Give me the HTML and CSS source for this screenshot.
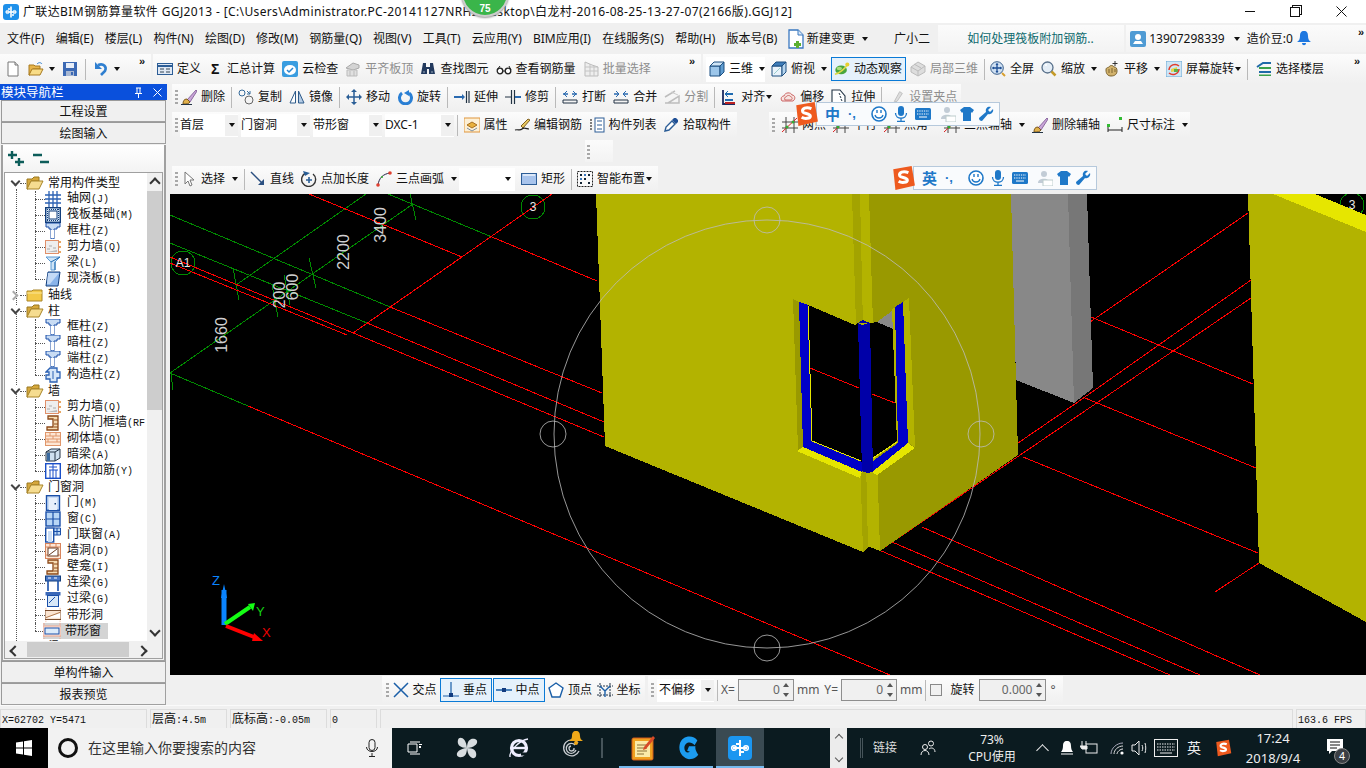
FILE: index.html
```html
<!DOCTYPE html>
<html lang="zh">
<head>
<meta charset="utf-8">
<title>广联达BIM钢筋算量软件 GGJ2013</title>
<link rel="stylesheet" href="styles.css">
</head>
<body>
<svg class="sprite" width="0" height="0">
<defs>
<symbol id="logo" viewBox="0 0 16 16"><rect width="16" height="16" rx="3" fill="#1e90ea"/><path d="M8 2.5v11M3 8h10M5 5h2M9 11h2" stroke="#fff" stroke-width="1.6" fill="none"/><circle cx="4.5" cy="8" r="1.6" fill="none" stroke="#fff"/><circle cx="11.5" cy="8" r="1.6" fill="none" stroke="#fff"/></symbol>
<symbol id="new" viewBox="0 0 16 16"><path d="M3 1h7l3 3v11H3z" fill="#fff" stroke="#777"/><path d="M10 1v3h3" fill="#ddd" stroke="#777"/></symbol>
<symbol id="open" viewBox="0 0 16 16"><path d="M1 4h5l1 1h5v3H5l-3 6H1z" fill="#e6b44a" stroke="#a87a20"/><path d="M4 8h11l-3 6H1z" fill="#f8dc86" stroke="#a87a20"/><path d="M9 3c2-2 4-1.500 5 0" stroke="#2f7fd0" fill="none"/></symbol>
<symbol id="save" viewBox="0 0 16 16"><path d="M1 1h14v14H1z" fill="#3c69b4"/><rect x="4" y="2" width="8" height="5" fill="#e8eef8"/><rect x="4" y="10" width="8" height="5" fill="#a9b8d2"/><rect x="9" y="11" width="2" height="3" fill="#3c69b4"/></symbol>
<symbol id="undo" viewBox="0 0 16 16"><path d="M5 4c6-2 9 2 7 6l-4 4" stroke="#2f7fd0" stroke-width="2.600" fill="none"/><path d="M2 1v7h7z" fill="#2f7fd0"/></symbol>
<symbol id="def" viewBox="0 0 16 16"><rect x=".5" y="2.500" width="15" height="11" fill="#dfe8f4" stroke="#2c5d96"/><path d="M1 5h14" stroke="#2c5d96" stroke-width="2"/><path d="M3 8h4M3 11h4M9 8h4M9 11h4" stroke="#345"/></symbol>
<symbol id="cloud" viewBox="0 0 16 16"><rect width="16" height="16" rx="2" fill="#3a9de0"/><ellipse cx="8" cy="9" rx="6" ry="5" fill="#fff"/><path d="M5 9l2 2 4-4" stroke="#2a86d0" stroke-width="1.500" fill="none"/></symbol>
<symbol id="flat" viewBox="0 0 16 16"><path d="M1 7l7-5 6 2v3l-6 2z" fill="#d4d4d4" stroke="#aaa"/><path d="M2 9h10v6H2z" fill="#e0e0e0" stroke="#bbb"/><path d="M5 10v5M9 10v5" stroke="#bbb"/></symbol>
<symbol id="bino" viewBox="0 0 16 16"><path d="M3 2h3v4h4V2h3l2 11h-6V8H7v5H1z" fill="#233a5e"/><path d="M3 11h2M11 11h2" stroke="#9ab"/></symbol>
<symbol id="glass" viewBox="0 0 16 16"><circle cx="4" cy="10" r="2.800" fill="#fff" stroke="#222" stroke-width="1.300"/><circle cx="12" cy="10" r="2.800" fill="#fff" stroke="#222" stroke-width="1.300"/><path d="M7 10h2M1 9l3-4M15 9l-2-4" stroke="#222"/></symbol>
<symbol id="batch" viewBox="0 0 16 16"><path d="M2 1v14h13V6L9 4 2 1z" fill="#eee" stroke="#bbb"/><path d="M2 6h13M2 10h13M7 3v12M11 5v10" stroke="#c4c4c4"/></symbol>
<symbol id="cube" viewBox="0 0 16 16"><path d="M1 5h10v10H1z" fill="#9cc6ea" stroke="#1c4f80"/><path d="M1 5l4-4h10l-4 4z" fill="#cfe5f6" stroke="#1c4f80"/><path d="M11 5l4-4v10l-4 4z" fill="#5f9cd0" stroke="#1c4f80"/></symbol>
<symbol id="top" viewBox="0 0 16 16"><path d="M1 5h10v10H1z" fill="#eaf3fb" stroke="#1c4f80"/><path d="M1 5l4-4h10l-4 4z" fill="#3e7cb8" stroke="#1c4f80"/><path d="M11 5l4-4v10l-4 4z" fill="#b7d5ee" stroke="#1c4f80"/><path d="M3 13l6-6" stroke="#9cc"/></symbol>
<symbol id="orbit" viewBox="0 0 18 16"><ellipse cx="8" cy="9" rx="6.500" ry="5" fill="#49a63c"/><ellipse cx="6" cy="7.500" rx="3" ry="2" fill="#a9dc7c"/><path d="M1 14C6 13 13 7 16 2" stroke="#ded84a" stroke-width="1.800" fill="none"/><circle cx="15" cy="3" r="2.300" fill="#e7d030"/></symbol>
<symbol id="part" viewBox="0 0 16 16"><path d="M1 6l7-5 7 4v6l-7 4-7-4z" fill="#ddd" stroke="#bbb"/><path d="M1 6l7 4 7-5M8 10v5M4 3l7 4" stroke="#bbb" fill="none"/></symbol>
<symbol id="full" viewBox="0 0 16 16"><circle cx="7" cy="7" r="6.300" fill="#cfe0f2" stroke="#3a5f8a"/><path d="M7 2.500v9M2.500 7h9" stroke="#1f4f95" stroke-width="1.300"/><path d="M5.500 4L7 2l1.500 2zM5.500 10L7 12l1.500-2zM4 5.500L2 7l2 1.500zM10 5.500L12 7l-2 1.500z" fill="#1f4f95"/><path d="M12 12l3 3" stroke="#d8a030" stroke-width="2"/></symbol>
<symbol id="zoom" viewBox="0 0 16 16"><circle cx="6.500" cy="6.500" r="5.500" fill="#e4edf6" stroke="#58708a" stroke-width="1.300"/><path d="M10.500 10.500l4 4" stroke="#c49a28" stroke-width="2.500"/><path d="M4 4h2" stroke="#fff" stroke-width="1.500"/></symbol>
<symbol id="pan" viewBox="0 0 16 16"><path d="M2 9c0-3 2-2 3-3 1-2 4-2 5 0 2 0 3 1 3 4 0 3-2 5-6 5-3 0-5-2-5-6z" fill="#d2b26c" stroke="#7c6430"/><path d="M5 8v4M8 7v5M11 8v3" stroke="#7c6430"/><path d="M11 5V0M8.500 2.500h5" stroke="#333"/></symbol>
<symbol id="rot" viewBox="0 0 16 16"><rect width="16" height="16" fill="#cfe6f6" stroke="#6aa8d4"/><path d="M3 9a6 6 0 0 1 10-4" stroke="#e23a2a" stroke-width="1.500" fill="none"/><path d="M13 8a6 6 0 0 1-10 4" stroke="#e23a2a" stroke-width="1.500" fill="none"/><path d="M5 8l6-2v4l-6 1z" fill="#e8d44c"/><path d="M8 8h4v3H8z" fill="#5bb04a"/></symbol>
<symbol id="floor" viewBox="0 0 16 16"><path d="M1 6l6-4h8" stroke="#1f6aa8" stroke-width="2" fill="none"/><path d="M3 6h12v2H3z" fill="#3aa04a"/><path d="M3 10h12v2H3z" fill="#1f6aa8"/><path d="M3 13.500h12V15H3z" fill="#3aa04a"/></symbol>
<symbol id="del" viewBox="0 0 16 16"><path d="M6 11L15 1l1 1-7 11z" fill="#c9a5d8" stroke="#8c6aa0"/><path d="M2 15c0-3 1-5 4-5l3 3c-1 2-4 2-7 2z" fill="#e0b04a" stroke="#7c5a20"/><path d="M0 15.500h11" stroke="#234"/></symbol>
<symbol id="copy" viewBox="0 0 16 16"><circle cx="4" cy="4" r="3" fill="none" stroke="#356a9a"/><circle cx="11" cy="11" r="4" fill="none" stroke="#666"/><path d="M9 2l3 3M12 2v3H9" stroke="#356a9a" fill="none"/></symbol>
<symbol id="mirror" viewBox="0 0 16 16"><path d="M6.500 2v12H1z" fill="#fff" stroke="#2d5a8a"/><path d="M9.500 2v12H15z" fill="#b6cde6" stroke="#2d5a8a"/></symbol>
<symbol id="move" viewBox="0 0 16 16"><path d="M8 1v14M1 8h14" stroke="#2a5e96" stroke-width="1.500"/><path d="M8 0l3 3H5zM8 16l3-3H5zM0 8l3-3v6zM16 8l-3-3v6z" fill="#2a5e96"/></symbol>
<symbol id="spin" viewBox="0 0 16 16"><path d="M5 4a6 6 0 1 0 7 0" stroke="#2a7fd4" stroke-width="3" fill="none"/><path d="M12 1v6l-5-3z" fill="#2a7fd4"/></symbol>
<symbol id="ext" viewBox="0 0 16 16"><path d="M0 8h8" stroke="#2a6ab0" stroke-width="2"/><path d="M8 5l3 3-3 3z" fill="#2a6ab0"/><path d="M12.500 2v12M15 2v12" stroke="#234" stroke-width="1.200"/></symbol>
<symbol id="trim" viewBox="0 0 16 16"><path d="M6.500 1v14M9.500 1v14" stroke="#234" stroke-width="1.200"/><path d="M0 8h6" stroke="#234"/><path d="M10 8h6" stroke="#2a6ab0" stroke-width="2"/></symbol>
<symbol id="brk" viewBox="0 0 16 16"><path d="M1 11h14v3H1z" fill="none" stroke="#234"/><path d="M1 5h5M10 5h5" stroke="#2a6ab0" stroke-width="1.500"/><path d="M5 2L2 5l3 3M11 2l3 3-3 3" fill="none" stroke="#2a6ab0"/></symbol>
<symbol id="mrg" viewBox="0 0 16 16"><path d="M1 11h14v3H1z" fill="none" stroke="#234"/><path d="M1 5h5M10 5h5" stroke="#2a6ab0" stroke-width="1.500"/><path d="M3 2l3 3-3 3M13 2l-3 3 3 3" fill="none" stroke="#2a6ab0"/></symbol>
<symbol id="split" viewBox="0 0 16 16"><path d="M1 14h14V7L4 14M1 8l10-6" fill="none" stroke="#bdbdbd" stroke-width="1.500"/><path d="M7 3l7 3" stroke="#ccc"/></symbol>
<symbol id="align" viewBox="0 0 16 16"><path d="M2 1v14h12" stroke="#1c2a60" stroke-width="1.800" fill="none"/><path d="M4 5h8M4 11h8" stroke="#1f6ab0" stroke-width="2"/><path d="M7 2L4 5l3 3" fill="none" stroke="#1f6ab0"/><path d="M4 13h10v2H4z" fill="#b22"/></symbol>
<symbol id="offs" viewBox="0 0 16 16"><path d="M2 12c-2-3 0-5 2-5 1-4 7-4 8-1 3 0 4 4 1 6z" fill="#f6e4e0" stroke="#c66"/><path d="M5 11c-1-2 0-3 1-3 1-2 4-2 5 0 1 0 2 2 0 3z" fill="none" stroke="#c66"/></symbol>
<symbol id="strch" viewBox="0 0 16 16"><path d="M1 1h8l5 6v8H1z" fill="#fff" stroke="#234" stroke-width="1.100"/><path d="M8 4l1 2M9 7l1 2M10 10l1 2" stroke="#234"/></symbol>
<symbol id="grip" viewBox="0 0 18 16"><path d="M1 15h16" stroke="#ccc"/><path d="M6 13L12 2l3 2-6 9z" fill="#ddd" stroke="#bbb"/></symbol>
<symbol id="attr" viewBox="0 0 16 16"><rect y="1" width="16" height="14" fill="#fdf0d6" stroke="#e0963c"/><path d="M3 8l5-3 5 3-5 3z" fill="#e8b03c" stroke="#a87020"/><path d="M3 11l5 3 5-3" stroke="#7c8ea0" fill="none"/></symbol>
<symbol id="edit" viewBox="0 0 16 16"><path d="M7 9l7-7 2 1-7 8z" fill="#e8c860" stroke="#806020"/><path d="M1 13c3-1 5 1 7-1s5 0 7 0" fill="none" stroke="#222" stroke-width="1.200"/></symbol>
<symbol id="list" viewBox="0 0 16 16"><rect x="6" y="1" width="9" height="14" fill="#fff" stroke="#2c5d96"/><path d="M8 4h5M8 8h5M8 12h5" stroke="#2c5d96"/><path d="M1 3h3M1 6h3M1 9h3M1 12h3" stroke="#555" stroke-width="1.600" stroke-dasharray="2 1"/></symbol>
<symbol id="pick" viewBox="0 0 16 16"><path d="M2 14l1-4 6-6 3 3-6 6z" fill="#fff" stroke="#2c5d96" stroke-width="1.400"/><path d="M9 3l2-2h2l2 2v2l-2 2z" fill="#1f4f95"/></symbol>
<symbol id="axis" viewBox="0 0 16 16"><path d="M4 0v16M12 0v16M0 5h16M0 11h16" stroke="#444"/><path d="M0 15L15 1" stroke="#d22"/><circle cx="5" cy="10" r="1.500" fill="#3a3"/><circle cx="11" cy="5" r="1.500" fill="#3a3"/></symbol>
<symbol id="dim" viewBox="0 0 16 16"><path d="M1 10v5M15 10v5M1 13h14" stroke="#222"/><rect y="7" width="3" height="3" fill="#3b3"/><rect x="12" width="3" height="3" fill="#3b3"/></symbol>
<symbol id="cur" viewBox="0 0 16 16"><path d="M3 1v12l3-3 2 5 2-1-2-5h4z" fill="#fff" stroke="#777"/></symbol>
<symbol id="line" viewBox="0 0 16 16"><path d="M1 1l12 12" stroke="#2a4f80" stroke-width="1.500"/><path d="M14 8v6H8z" fill="#2a4f80"/></symbol>
<symbol id="len" viewBox="0 0 16 16"><path d="M5 2A7 7 0 1 0 12 3" stroke="#333" stroke-width="1.400" fill="none"/><path d="M8 6v6M5 9h6" stroke="#2a5e96" stroke-width="1.600"/><path d="M2 0l7 2-5 3z" fill="#2a5e96"/></symbol>
<symbol id="arc" viewBox="0 0 16 16"><path d="M2 14C3 7 7 3 14 2" stroke="#224" fill="none"/><circle cx="2" cy="14" r="1.800" fill="#e04030"/><circle cx="14" cy="2" r="1.800" fill="#e04030"/><circle cx="6" cy="6" r="1" fill="#3a3"/></symbol>
<symbol id="rect" viewBox="0 0 16 16"><rect x=".5" y="2.500" width="15" height="11" fill="#a8c4ec" stroke="#2c5d96"/><path d="M2 4h12" stroke="#dce8f8" stroke-width="2"/></symbol>
<symbol id="smart" viewBox="0 0 16 16"><rect x=".5" y=".5" width="15" height="15" fill="#fafafa" stroke="#222" stroke-dasharray="2 1"/><path d="M3 3h2v2H3zM11 3h2v2h-2zM3 11h2v2H3zM11 11h2v2h-2zM7 7h2v2H7z" fill="#123"/><path d="M7 3h2v2H7zM3 7h2v2H3z" fill="#3a78c0"/></symbol>
<symbol id="cross" viewBox="0 0 16 16"><path d="M1 1l14 14M15 1L1 15" stroke="#1a5fa8" stroke-width="1.500"/></symbol>
<symbol id="perp" viewBox="0 0 16 16"><path d="M8 0v14M0 14h16" stroke="#1a5fa8" stroke-width="1.200"/><rect x="6" y="11" width="4" height="4" fill="#123c80"/></symbol>
<symbol id="mid" viewBox="0 0 16 16"><path d="M0 8h16" stroke="#1a5fa8" stroke-width="1.500"/><rect x="6" y="6" width="4" height="4" fill="#123c80"/></symbol>
<symbol id="vert" viewBox="0 0 16 16"><path d="M8 1l7 5-3 9H4L1 6z" fill="#fff" stroke="#1a5fa8" stroke-width="1.400"/></symbol>
<symbol id="coord" viewBox="0 0 16 16"><path d="M3 1v14M13 1v14M0 4h16M0 13h16" stroke="#234" stroke-dasharray="2 1"/><path d="M3 4l5 5 5-5M8 9v6" stroke="#1a5fa8" stroke-width="1.400" fill="none"/></symbol>
<symbol id="doc" viewBox="0 0 16 20"><path d="M1 1h9l5 5v13H1z" fill="#fff" stroke="#3a78c0" stroke-width="1.300"/><path d="M10 1v5h5" fill="#d6e6f6" stroke="#3a78c0"/><path d="M8 12h3v2h2v3h-2v2H8v-2H6v-3h2z" fill="#5cb030"/></symbol>
<symbol id="acct" viewBox="0 0 16 16"><rect width="16" height="16" rx="2" fill="#4f9bd4"/><circle cx="8" cy="6" r="3" fill="#fff"/><path d="M3 13h10l-2-3H5z" fill="#fff"/></symbol>
<symbol id="bell" viewBox="0 0 16 16"><path d="M8 0c3 0 4 2 4 5 0 3 1 5 3 6H1c2-1 3-3 3-6 0-3 1-5 4-5z" fill="#1e78e0"/><path d="M6 12h4c0 3-4 3-4 0z" fill="#1e78e0"/></symbol>
<symbol id="t-grid" viewBox="0 0 16 16"><path d="M4 0v16M8 0v16M12 0v16M0 4h16M0 8h16M0 12h16" stroke="#2c62b4" stroke-width="1.300"/></symbol>
<symbol id="t-raft" viewBox="0 0 16 16"><rect x=".7" y=".7" width="14.600" height="14.600" fill="#d8e8f6" stroke="#123e7c" stroke-width="1.400"/><rect x="4" y="4" width="8" height="8" fill="#fff" stroke="#123e7c"/><path d="M2 2.500h12M2 13.500h12M2.500 2v12M13.500 2v12" stroke="#123e7c" stroke-dasharray="1 1"/></symbol>
<symbol id="t-col" viewBox="0 0 16 16"><path d="M1 0h14v4h-3v2H9v10H6V6H4V4H1z" fill="#c8dcf4" stroke="#1a4fa8"/><path d="M6 7h3v8H6z" fill="#fff"/></symbol>
<symbol id="t-wall" viewBox="0 0 16 16"><rect x=".5" y="1.500" width="13" height="13" fill="#eee" stroke="#e0906a"/><path d="M2 13l10-2V13z" fill="#bbb"/><path d="M2 10h3M4 7h3M8 9h3" stroke="#ccc" stroke-width="2"/><path d="M14 3h2M14 8h2M14 13h2" stroke="#e08a30" stroke-width="1.400"/></symbol>
<symbol id="t-beam" viewBox="0 0 16 16"><path d="M1 2h14l-5 5v8H6V7z" fill="#cfe4f6" stroke="#5a9ad4"/><path d="M6 7l9-5M10 7v8" stroke="#1f6ab0"/></symbol>
<symbol id="t-slab" viewBox="0 0 16 16"><path d="M3 1h12l-2 14H1z" fill="#8ab4ea" stroke="#123e7c"/><path d="M3 2h11L5 13H2z" fill="#c4daf6"/></symbol>
<symbol id="t-gz" viewBox="0 0 16 16"><path d="M5 1h7v4h3v6h-3v4H5v-3H1V8h3V5H1z" fill="#d6e6f8" stroke="#2c62b4" stroke-width="1.300"/><path d="M8 4v8" stroke="#2c62b4"/></symbol>
<symbol id="t-rf" viewBox="0 0 16 16"><path d="M3 1h10v14H2v-3h6V4H3z" fill="#f6dcb4" stroke="#8c4818" stroke-width="1.300"/><path d="M9 5h4M9 9h4M9 12h4" stroke="#8c4818"/></symbol>
<symbol id="t-brick" viewBox="0 0 16 16"><rect x=".5" y="1.500" width="15" height="13" fill="#fde6d4" stroke="#e0966a"/><path d="M1 5h14M1 8h14M1 11h14M5 2v3M11 2v3M8 5v3M3 8v3M12 8v3" stroke="#e0966a"/></symbol>
<symbol id="t-hb" viewBox="0 0 16 16"><path d="M1 5l5-3h9v9l-5 3H1z" fill="#cfe0f0" stroke="#234"/><path d="M1 5h9v9M10 5l5-3" stroke="#234" fill="none"/><rect x="2" y="6" width="3" height="8" fill="#3a6aa0"/></symbol>
<symbol id="t-rbr" viewBox="0 0 16 16"><rect x=".7" y=".7" width="14.600" height="14.600" fill="none" stroke="#1a4fc8" stroke-width="1.400"/><path d="M4 4h8M4 7h9M8 1v15M5 7v8M11 7v8" stroke="#1a4fc8"/></symbol>
<symbol id="t-door" viewBox="0 0 16 16"><rect x="1.500" y=".7" width="13" height="14.600" fill="#c8dcf6" stroke="#1a4fa8" stroke-width="1.400"/><rect x="4" y="3" width="8" height="12" fill="#e8f0fb"/><rect x="9.500" y="8" width="1.500" height="1.500" fill="#123e7c"/></symbol>
<symbol id="t-win" viewBox="0 0 16 16"><rect x="1" y="1" width="14" height="14" fill="#b8d6f6" stroke="#1a4fa8" stroke-width="1.400"/><path d="M8 1v14M1 8h14" stroke="#1a4fa8" stroke-width="1.200"/></symbol>
<symbol id="t-dw" viewBox="0 0 16 16"><rect x=".7" y="1" width="8" height="14" fill="#fff" stroke="#1a4fa8" stroke-width="1.400"/><rect x="3" y="4" width="4" height="11" fill="#c8dcf6"/><path d="M9 1h6.500v7H9z" fill="#b8d6f6" stroke="#1a4fa8"/><path d="M12 1v7M9 4.500h6" stroke="#1a4fa8"/></symbol>
<symbol id="t-hole" viewBox="0 0 16 16"><rect x=".5" y=".5" width="15" height="15" fill="#fde6d4" stroke="#d8845c"/><path d="M1 4h14M1 12h14M5 1v3M11 1v3" stroke="#d8845c"/><rect x="3" y="5" width="10" height="8" fill="#fff" stroke="#6a3a20"/><path d="M4 12l8-6" stroke="#6a3a20"/></symbol>
<symbol id="t-lb" viewBox="0 0 16 16"><rect x=".5" y="1" width="15" height="5" fill="#4a78c8" stroke="#123e7c"/><path d="M3 3h3M9 3h3" stroke="#fff"/><path d="M3 6v10M13 6v10" stroke="#1a4fa8" stroke-width="1.600"/></symbol>
<symbol id="t-gl" viewBox="0 0 16 16"><rect x=".5" y="1" width="15" height="3.500" fill="#3a68b8"/><rect x="2.500" y="4.500" width="11" height="11" fill="#d8e8f8" stroke="#1a4fa8"/><path d="M4 12l6-6" stroke="#1a4fa8"/></symbol>
<symbol id="t-sh" viewBox="0 0 18 16"><path d="M1 0v16M17 0v16" stroke="#f0b090" stroke-dasharray="2 1"/><rect y="3" width="18" height="10" fill="#fbe4d0" stroke="#6a3a18"/><path d="M1 11l16-5v5z" fill="#fff"/><path d="M1 11l16-6" stroke="#a86a3a"/></symbol>
<symbol id="t-sw" viewBox="0 0 18 16"><path d="M1 0v16M17 0v16" stroke="#f0a890" stroke-dasharray="2 1"/><rect y="3" width="18" height="10" fill="#f8e8e0" stroke="#f0a890"/><rect x="2" y="5" width="14" height="6" fill="#dcecfb" stroke="#1a4fa8"/></symbol>
<symbol id="fo" viewBox="0 0 18 16"><path d="M1 4h5l2-2h5v4H5L2 14H1z" fill="#d6a83c" stroke="#9a7820"/><path d="M5 6h12l-4 8H1z" fill="#f5dc90" stroke="#a88428"/></symbol>
<symbol id="fc" viewBox="0 0 18 16"><path d="M1 4h5l1-1h9v11H1z" fill="#f3c948" stroke="#a88428"/><path d="M1 6h15" stroke="#fbe79a"/></symbol>
<symbol id="ime-s" viewBox="0 0 24 24"><path d="M3 4l17-3 3 18-18 4z" fill="#ee5a1e"/><path d="M17 7c-5-2-9 0-8 3 1 2 7 1 7 4 0 2-5 3-8 1" stroke="#fff" stroke-width="2.800" fill="none"/></symbol>
<symbol id="smile" viewBox="0 0 16 16"><circle cx="8" cy="8" r="7" fill="#fff" stroke="#1e78c8" stroke-width="1.600"/><path d="M4 9c1 4 7 4 8 0" stroke="#1e78c8" stroke-width="1.300" fill="none"/><path d="M6 4v3M10 4v3" stroke="#1e78c8" stroke-width="1.400"/></symbol>
<symbol id="mic" viewBox="0 0 16 16"><rect x="5" width="6" height="10" rx="3" fill="#1e78c8"/><path d="M2.500 7c0 7 11 7 11 0M8 12v3M4 15.500h8" stroke="#1e78c8" stroke-width="1.300" fill="none"/></symbol>
<symbol id="kb" viewBox="0 0 16 12"><rect width="16" height="12" rx="1.500" fill="#1e78c8"/><path d="M2 3h12M2 6h12" stroke="#fff" stroke-dasharray="1.300 1" /><path d="M4 9h8" stroke="#fff"/></symbol>
<symbol id="usr" viewBox="0 0 16 16"><circle cx="7" cy="4" r="3" fill="#c2ccd6"/><path d="M1 13c0-5 8-5 10-3H6v3z" fill="#c2ccd6"/><rect x="6" y="10" width="10" height="6" fill="#fff" stroke="#bcc"/></symbol>
<symbol id="shirt" viewBox="0 0 16 16"><path d="M5 1h6l4 3-2 3-1-1v9H4V6L3 7 1 4z" fill="#1e78c8"/></symbol>
<symbol id="wrench" viewBox="0 0 16 16"><path d="M15 3l-3 3-2-2 3-3c-3-1-6 1-5 5L1 12c0 2 1 3 3 3l6-7c3 1 6-2 5-5z" fill="#1e78c8"/></symbol>
<symbol id="win" viewBox="0 0 16 16"><path d="M0 2.500l7-1v6H0zM8 1.300L16 0v7.500H8zM0 8.500h7v6l-7-1zM8 8.500h8V16l-8-1.200z" fill="#fff"/></symbol>
<symbol id="tview" viewBox="0 0 16 16"><path d="M3 2h10M3 14h10M1 4h9v8H1z" stroke="#fff" fill="none"/><rect x="12" y="6" width="2" height="2" fill="#fff"/><rect x="12" y="4" width="3" height="1" fill="#fff"/></symbol>
<symbol id="fan" viewBox="0 0 22 22"><path d="M11 11C3 11 1 7 2 3s8-3 9 8zM11 11c0-8 4-10 8-9s3 8-8 9zM11 11c8 0 10 4 9 8s-8 3-9-8zM11 11c0 8-4 10-8 9s-3-8 8-9z" fill="#d8dde0"/></symbol>
<symbol id="ie" viewBox="0 0 22 22"><circle cx="11" cy="11" r="7.500" fill="none" stroke="#eef" stroke-width="3.200"/><path d="M5 11h13" stroke="#eef" stroke-width="2.400"/><path d="M13 17h8" stroke="#0a1a1f" stroke-width="3"/><path d="M2 20C1 14 12 3 20 2" stroke="#eef" stroke-width="1.400" fill="none"/></symbol>
<symbol id="swirl" viewBox="0 0 22 22"><path d="M18 6a8 8 0 1 0 1 8M15 8a5 5 0 1 0 1 5M11 9a2.500 2.500 0 1 0 3 2" stroke="#c8ccd0" stroke-width="1.300" fill="none"/></symbol>
<symbol id="belly" viewBox="0 0 14 14"><path d="M7 0c3 0 4 2 4 5 0 2 1 4 3 5H0c2-1 3-3 3-5 0-3 1-5 4-5z" fill="#f0a818"/><circle cx="7" cy="12" r="2" fill="#f0a818"/></symbol>
<symbol id="note" viewBox="0 0 24 26"><rect x="1" y="3" width="21" height="22" rx="1.500" fill="#f0a020" stroke="#d05818"/><rect x="4" y="6" width="15" height="16" fill="#fbeaa8"/><path d="M6 10h10M6 13h10M6 16h10M6 19h7" stroke="#8a7038"/><path d="M13 12l9-11 2 2-9 11-3 1z" fill="#d84a28"/></symbol>
<symbol id="gapp" viewBox="0 0 24 28"><path d="M21 6C17-1 4 0 2 10c-2 9 4 15 10 16 6 0 9-3 10-5-1-1-4-6-3-9h-7l-2 5 3 1c-3 2-6 0-6-4 0-6 7-8 11-3z" fill="#1c9cf0"/></symbol>
<symbol id="gblue" viewBox="0 0 24 24"><rect width="24" height="24" rx="4" fill="#1b96f0"/><path d="M12 4v16M5 12h14M8 8h3M13 16h3" stroke="#fff" stroke-width="2" fill="none"/><circle cx="6" cy="12" r="2.300" fill="none" stroke="#fff" stroke-width="1.500"/><circle cx="18" cy="12" r="2.300" fill="none" stroke="#fff" stroke-width="1.500"/></symbol>
<symbol id="people" viewBox="0 0 16 16"><circle cx="5" cy="7" r="2.500" fill="none" stroke="#eee"/><path d="M1 15c0-6 8-6 8 0" stroke="#eee" fill="none"/><circle cx="11" cy="3.500" r="2.500" fill="none" stroke="#eee"/><path d="M9 9c2-2 6-1 6 3" stroke="#eee" fill="none"/></symbol>
<symbol id="bellw" viewBox="0 0 14 16"><path d="M7 1c3 0 4 2 4 5s1 5 2 6H1c1-1 2-3 2-6s1-5 4-5z" fill="#fff"/><path d="M1 14h12" stroke="#fff"/></symbol>
<symbol id="plug" viewBox="0 0 18 16"><rect x="6" y="4" width="11" height="9" fill="none" stroke="#eee"/><path d="M2 1v5M6 1v3M0 6h7v3H2z" fill="#eee" stroke="#eee"/></symbol>
<symbol id="wifi" viewBox="0 0 16 16"><path d="M2 14C2 8 8 3 14 3" stroke="#aab" fill="none"/><path d="M5 14c0-4 4-8 9-8" stroke="#ddd" fill="none"/><path d="M8 14c0-2 3-5 6-5" stroke="#eee" fill="none"/><circle cx="13" cy="13" r="1.600" fill="#fff"/></symbol>
<symbol id="vol" viewBox="0 0 16 16"><path d="M1 5h3l4-4v14l-4-4H1z" fill="none" stroke="#eee"/><path d="M11 5c1 2 1 4 0 6M14 3c1 3 1 7 0 10" stroke="#eee" fill="none"/></symbol>
<symbol id="kbw" viewBox="0 0 24 18"><rect x=".5" y=".5" width="23" height="17" fill="none" stroke="#eee"/><path d="M3 5h18M3 8h18M3 11h18" stroke="#eee" stroke-dasharray="1.500 1"/><path d="M6 14h12" stroke="#eee"/></symbol>
<symbol id="msg" viewBox="0 0 16 16"><path d="M0 0h16v12H5l-3 3v-3H0z" fill="#fff"/><path d="M3 3h10M3 6h10M3 9h7" stroke="#111"/></symbol>
</defs>
</svg>

<div class="app">
  <header class="title">
    <svg class="tlogo"><use href="#logo"/></svg>
    <span class="ttext">广联达BIM钢筋算量软件 GGJ2013 - [C:\Users\Administrator.PC-20141127NRHI\Desktop\白龙村-2016-08-25-13-27-07(2166版).GGJ12]</span>
    <div class="winbtns">
      <span class="wmin"></span><span class="wmax"></span>
      <svg class="wcls" viewBox="0 0 11 11"><path d="M.5.500l10 10M10.500.500l-10 10" stroke="#111" fill="none"/></svg>
    </div>
  </header>

  <nav class="menu">
    <span>文件(F)</span><span>编辑(E)</span><span>楼层(L)</span><span>构件(N)</span><span>绘图(D)</span><span>修改(M)</span><span>钢筋量(Q)</span><span>视图(V)</span><span>工具(T)</span><span>云应用(Y)</span><span>BIM应用(I)</span><span>在线服务(S)</span><span>帮助(H)</span><span>版本号(B)</span>
    <span class="t newch"><svg class="ic docic"><use href="#doc"/></svg>新建变更</span><i class="dd mdd"></i>
    <span class="helper">广小二</span>
    <span class="hint">如何处理筏板附加钢筋..</span>
    <div class="acct">
      <svg class="ic"><use href="#acct"/></svg><span>13907298339</span><i class="dd"></i><span class="bean">造价豆:0</span><svg class="ic bellic"><use href="#bell"/></svg><span class="more">»</span>
    </div>
  </nav>

  <div class="bar1">
    <div class="tb tb-a">
      <svg class="ic"><use href="#new"/></svg><span class="t2"><svg class="ic"><use href="#open"/></svg><i class="dd"></i></span><svg class="ic"><use href="#save"/></svg><i class="sep"></i><span class="t2"><svg class="ic"><use href="#undo"/></svg><i class="dd"></i></span><span class="more">»</span>
    </div>
    <div class="tb tb-b">
      <span class="t"><svg class="ic"><use href="#def"/></svg>定义</span>
      <span class="t"><b class="sigma">Σ</b>汇总计算</span>
      <span class="t"><svg class="ic"><use href="#cloud"/></svg>云检查</span>
      <span class="t off"><svg class="ic"><use href="#flat"/></svg>平齐板顶</span>
      <span class="t"><svg class="ic"><use href="#bino"/></svg>查找图元</span>
      <span class="t"><svg class="ic"><use href="#glass"/></svg>查看钢筋量</span>
      <span class="t off"><svg class="ic"><use href="#batch"/></svg>批量选择</span>
      <span class="more">»</span>
    </div>
    <div class="tb tb-c">
      <span class="t combo3d"><svg class="ic"><use href="#cube"/></svg>三维<i class="dd"></i></span>
      <span class="t"><svg class="ic"><use href="#top"/></svg>俯视</span><i class="dd"></i>
      <span class="t on orbitbtn"><svg class="ic"><use href="#orbit"/></svg>动态观察</span>
      <span class="t off mn2"><svg class="ic"><use href="#part"/></svg>局部三维</span><i class="sep"></i>
      <span class="t"><svg class="ic"><use href="#full"/></svg>全屏</span>
      <span class="t ml1"><svg class="ic"><use href="#zoom"/></svg>缩放</span><i class="dd"></i>
      <span class="t ml2"><svg class="ic"><use href="#pan"/></svg>平移</span><i class="dd"></i>
      <span class="t ml1"><svg class="ic"><use href="#rot"/></svg>屏幕旋转<i class="dd"></i></span><i class="sep"></i>
      <span class="t ml3"><svg class="ic"><use href="#floor"/></svg>选择楼层</span>
      <span class="more">»</span>
    </div>
  </div>

  <div class="work">
    <aside class="side">
      <div class="dock"><span>模块导航栏</span><span class="dock-r"><svg class="pin" viewBox="0 0 9 11"><path d="M2 1h5M3 1v5M6 1v5M1 6.500h7M4.500 7v4" stroke="#fff" fill="none"/></svg><svg class="pin" viewBox="0 0 9 9"><path d="M.5.500l8 8M8.500.500l-8 8" stroke="#fff"/></svg></span></div>
      <div class="sbtn">工程设置</div>
      <div class="sbtn">绘图输入</div>
      <div class="panel">
        <div class="expand">
          <svg class="exp" viewBox="0 0 18 16"><path d="M1 4h9M5 0v8M8 11h9M12 7v8" stroke="#0d5d5a" stroke-width="2.400" fill="none"/></svg>
          <svg class="exp" viewBox="0 0 18 16"><path d="M1 4h9M8 11h9" stroke="#0d5d5a" stroke-width="2.400" fill="none"/></svg>
        </div>
        <div class="treebox">
          <div class="tree">
            <div class="fold"><i class="chev"></i><svg class="fi"><use href="#fo"/></svg>常用构件类型</div>
            <div class="leaf"><svg class="li"><use href="#t-grid"/></svg><span>轴网<em>(J)</em></span></div>
            <div class="leaf"><svg class="li"><use href="#t-raft"/></svg><span>筏板基础<em>(M)</em></span></div>
            <div class="leaf"><svg class="li"><use href="#t-col"/></svg><span>框柱<em>(Z)</em></span></div>
            <div class="leaf"><svg class="li"><use href="#t-wall"/></svg><span>剪力墙<em>(Q)</em></span></div>
            <div class="leaf"><svg class="li"><use href="#t-beam"/></svg><span>梁<em>(L)</em></span></div>
            <div class="leaf last"><svg class="li"><use href="#t-slab"/></svg><span>现浇板<em>(B)</em></span></div>
            <div class="fold"><i class="chev shut"></i><svg class="fi"><use href="#fc"/></svg>轴线</div>
            <div class="fold"><i class="chev"></i><svg class="fi"><use href="#fo"/></svg>柱</div>
            <div class="leaf"><svg class="li"><use href="#t-col"/></svg><span>框柱<em>(Z)</em></span></div>
            <div class="leaf"><svg class="li"><use href="#t-col"/></svg><span>暗柱<em>(Z)</em></span></div>
            <div class="leaf"><svg class="li"><use href="#t-col"/></svg><span>端柱<em>(Z)</em></span></div>
            <div class="leaf last"><svg class="li"><use href="#t-gz"/></svg><span>构造柱<em>(Z)</em></span></div>
            <div class="fold"><i class="chev"></i><svg class="fi"><use href="#fo"/></svg>墙</div>
            <div class="leaf"><svg class="li"><use href="#t-wall"/></svg><span>剪力墙<em>(Q)</em></span></div>
            <div class="leaf"><svg class="li"><use href="#t-rf"/></svg><span>人防门框墙<em>(RF</em></span></div>
            <div class="leaf"><svg class="li"><use href="#t-brick"/></svg><span>砌体墙<em>(Q)</em></span></div>
            <div class="leaf"><svg class="li"><use href="#t-hb"/></svg><span>暗梁<em>(A)</em></span></div>
            <div class="leaf last"><svg class="li"><use href="#t-rbr"/></svg><span>砌体加筋<em>(Y)</em></span></div>
            <div class="fold"><i class="chev"></i><svg class="fi"><use href="#fo"/></svg>门窗洞</div>
            <div class="leaf"><svg class="li"><use href="#t-door"/></svg><span>门<em>(M)</em></span></div>
            <div class="leaf"><svg class="li"><use href="#t-win"/></svg><span>窗<em>(C)</em></span></div>
            <div class="leaf"><svg class="li"><use href="#t-dw"/></svg><span>门联窗<em>(A)</em></span></div>
            <div class="leaf"><svg class="li"><use href="#t-hole"/></svg><span>墙洞<em>(D)</em></span></div>
            <div class="leaf"><svg class="li"><use href="#t-rf"/></svg><span>壁龛<em>(I)</em></span></div>
            <div class="leaf"><svg class="li"><use href="#t-lb"/></svg><span>连梁<em>(G)</em></span></div>
            <div class="leaf"><svg class="li"><use href="#t-gl"/></svg><span>过梁<em>(G)</em></span></div>
            <div class="leaf"><svg class="li"><use href="#t-sh"/></svg><span>带形洞</span></div>
            <div class="leaf sel last"><svg class="li"><use href="#t-sw"/></svg><span>带形窗</span></div>
            <div class="fold"><i class="chev shut"></i><svg class="fi"><use href="#fc"/></svg>梁</div>
          </div>
          <div class="vscroll"><span class="arr up"></span><span class="vthumb"></span><span class="arr down"></span></div>
          <div class="hscroll"><span class="arr left"></span><span class="hthumb"></span><span class="arr right"></span></div>
        </div>
      </div>
      <div class="sbtn">单构件输入</div>
      <div class="sbtn">报表预览</div>
    </aside>

    <main class="main">
      <div class="tools">
        <div class="rowt">
          <div class="tb tb2">
            <i class="gr"></i>
            <span class="t"><svg class="ic"><use href="#del"/></svg>删除</span><i class="sep"></i>
            <span class="t"><svg class="ic"><use href="#copy"/></svg>复制</span>
            <span class="t"><svg class="ic"><use href="#mirror"/></svg>镜像</span><i class="sep"></i>
            <span class="t"><svg class="ic"><use href="#move"/></svg>移动</span>
            <span class="t"><svg class="ic"><use href="#spin"/></svg>旋转</span><i class="sep"></i>
            <span class="t"><svg class="ic"><use href="#ext"/></svg>延伸</span>
            <span class="t"><svg class="ic"><use href="#trim"/></svg>修剪</span><i class="sep"></i>
            <span class="t"><svg class="ic"><use href="#brk"/></svg>打断</span>
            <span class="t"><svg class="ic"><use href="#mrg"/></svg>合并</span>
            <span class="t off"><svg class="ic"><use href="#split"/></svg>分割</span><i class="sep"></i>
            <span class="t"><svg class="ic"><use href="#align"/></svg>对齐<i class="dd"></i></span>
            <span class="t off1"><svg class="ic"><use href="#offs"/></svg>偏移</span>
            <span class="t"><svg class="ic"><use href="#strch"/></svg>拉伸</span><i class="sep"></i>
            <span class="t off off1"><svg class="ic"><use href="#grip"/></svg>设置夹点</span>
          </div>
        </div>
        <div class="rowt">
          <div class="tb tb3">
            <i class="gr"></i>
            <span class="cb"><span class="cbt">首层</span><span class="cba"><i class="dd"></i></span></span>
            <span class="cb"><span class="cbt">门窗洞</span><span class="cba"><i class="dd"></i></span></span>
            <span class="cb"><span class="cbt">带形窗</span><span class="cba"><i class="dd"></i></span></span>
            <span class="cb"><span class="cbt">DXC-1</span><span class="cba"><i class="dd"></i></span></span>
            <i class="sep"></i>
            <span class="t"><svg class="ic"><use href="#attr"/></svg>属性</span>
            <span class="t"><svg class="ic"><use href="#edit"/></svg>编辑钢筋</span>
            <span class="t"><svg class="ic"><use href="#list"/></svg>构件列表</span>
            <span class="t"><svg class="ic"><use href="#pick"/></svg>拾取构件</span>
          </div>
          <div class="tb tb3b">
            <i class="gr"></i>
            <span class="t"><svg class="ic"><use href="#axis"/></svg>两点</span>
            <span class="t"><svg class="ic"><use href="#axis"/></svg>平行</span>
            <span class="t wide"><svg class="ic"><use href="#axis"/></svg>点角</span>
            <span class="t"><svg class="ic"><use href="#axis"/></svg>三点辅轴</span><i class="dd"></i>
            <span class="t"><svg class="ic"><use href="#del"/></svg>删除辅轴</span>
            <span class="t"><svg class="ic"><use href="#dim"/></svg>尺寸标注</span><i class="dd"></i>
          </div>
        </div>
        <div class="rowgrip"><div class="stub"><i class="gr"></i></div></div>
        <div class="rowt">
          <div class="tb tb4">
            <i class="gr"></i>
            <span class="t sel1"><svg class="ic"><use href="#cur"/></svg>选择</span><i class="dd"></i><i class="sep"></i>
            <span class="t"><svg class="ic"><use href="#line"/></svg>直线</span>
            <span class="t"><svg class="ic"><use href="#len"/></svg>点加长度</span>
            <span class="t"><svg class="ic"><use href="#arc"/></svg>三点画弧</span><i class="dd"></i>
            <span class="blank"><i class="dd"></i></span>
            <span class="t"><svg class="ic"><use href="#rect"/></svg>矩形</span><i class="sep"></i>
            <span class="t"><svg class="ic"><use href="#smart"/></svg>智能布置<i class="dd"></i></span>
          </div>
        </div>
      </div>

      <div class="canvas">
        <svg class="scene" viewBox="170 194 1196 481" width="1196" height="481">
          <g class="green">
            <path d="M170 215L390 307M170 243L367 323M170 373L248 406M170 373L413 204M236 285L366 194M388 194L492 237"/>
            <path d="M410 194L416 220M309 258L316 288M284 275L290 305M272 285L278 317M233 268L239 300M171 373L173 390"/>
            <circle cx="183" cy="263" r="12"/><circle cx="533" cy="207" r="12"/><circle cx="1352" cy="205" r="12"/>
          </g>
          <g class="red">
            <path d="M170 257L604 437M170 263L347 335M367 323L604 422M390 307L602 393M309 194L462 257M492 237L597 281M248 406L890 675"/>
            <path d="M353 333L552 194M462 257L353 333"/>
            <path d="M1091 317L1253 384M1085 398L1256 468M1023 457L1258 553"/>
            <path d="M1090 322L1248 213M1018 443L1075 404M1075 404L1251 280M882 549L1251 298"/>
            <path d="M922 527L1260 675M892 542L1200 675M872 547L1170 675M1259 563L1215 592"/>
          </g>
          <text class="dim" transform="translate(227 335) rotate(-90)">1660</text>
          <text class="dim" transform="translate(285 295) rotate(-90)">200</text>
          <text class="dim" transform="translate(298 287) rotate(-90)">600</text>
          <text class="dim" transform="translate(349 252) rotate(-90)">2200</text>
          <text class="dim" transform="translate(386 225) rotate(-90)">3400</text>
          <text class="axt" x="183" y="267">A1</text>
          <text class="axt" x="533" y="211">3</text>
          <text class="axt" x="1352" y="209">3</text>

          <g class="solid">
            <path class="l" d="M596 194H852L863 552L605 446Z"/>
            <path class="d2" d="M852 194H860L868 547L863 552Z"/>
            <path class="l" d="M860 194H869L880 551L870 547L868 547Z"/>
            <path class="r" d="M869 194H1011L1018 455L880 551Z"/>
            <path class="g1" d="M1011 194H1068L1074 403L1016 380Z"/>
            <path class="g2" d="M1068 194H1087L1093 388L1074 403Z"/>
            <path class="l" d="M1248 194H1273L1366 232V622L1259 563Z"/>
            <path class="y" d="M1273 194H1315L1366 215V232Z"/>
            <!-- window -->
            <path class="r" d="M793 299L799 302L803 447L798 450Z"/>
            <path class="k" d="M808 305L855 325L858 323L870 323L877 322L892 311L897 441L873 458L862 462L812 441Z"/>
            <path class="g1" d="M877 322L892 311L893 329Z"/>
            <path class="l" d="M892 309L896 307L899 443L897 443Z"/>
            <path class="l" d="M903 302L909 298L915 447L908 443Z"/>
            <path class="b" d="M799 302L808 305L812 441L803 447Z"/>
            <path class="b" d="M895 307L903 302L908 443L898 443Z"/>
            <path class="b" d="M803 447L812 441L862 462V472Z"/>
            <path class="b" d="M873 461L898 443L908 443L872 472Z"/>
            <path class="bd" d="M858 323L863 320L870 323L873 472L867 473L862 471Z"/>
            <path class="y" d="M797 451L803 447L862 472L860 478Z"/>
            <path class="y" d="M872 472L908 443L915 448L877 475Z"/>
            <path class="l" d="M869 323H858L862 325Z"/>
            <path class="yl" d="M808 305L812 441L861 461M873 458L897 442"/>
            <path class="redl" d="M810 368L859 388M872 394L895 403"/>
          </g>
          <g class="orbit">
            <ellipse cx="767" cy="434" rx="213" ry="214"/>
            <circle cx="553" cy="434" r="13"/><circle cx="767" cy="220" r="13"/><circle cx="767" cy="648" r="13"/><circle cx="981" cy="434" r="13"/>
          </g>
          <g class="gizmo">
            <path class="gz" d="M224 625V590" />
            <path class="gzf" d="M221 598L224 584L227 598Z"/>
            <path class="gy" d="M225 624L250 607"/>
            <path class="gyf" d="M248 604L255 603L253 611Z"/>
            <path class="gx" d="M226 626L254 637"/>
            <path class="gxf" d="M254 633L263 641H252Z"/>
            <text class="tz" x="212" y="585">Z</text>
            <text class="ty" x="256" y="616">Y</text>
            <text class="tx" x="262" y="637">X</text>
          </g>
        </svg>
      </div>

      <div class="snap">
        <div class="tb sn1">
          <i class="gr"></i>
          <span class="t"><svg class="ic"><use href="#cross"/></svg>交点</span>
          <span class="t on snbtn"><svg class="ic"><use href="#perp"/></svg>垂点</span>
          <span class="t on snbtn snb2"><svg class="ic"><use href="#mid"/></svg>中点</span>
          <span class="t"><svg class="ic"><use href="#vert"/></svg>顶点</span>
          <span class="t"><svg class="ic"><use href="#coord"/></svg>坐标</span>
        </div>
        <div class="tb sn2">
          <i class="gr"></i>
          <span class="cb cbo"><span class="cbt">不偏移</span><span class="cba"><i class="dd"></i></span></span>
          <i class="sep"></i>
          <span class="lab">X=</span><span class="num"><span>0</span><i class="spin"><b class="su"></b><b class="sd"></b></i></span><span class="lab">mm</span>
          <span class="lab laby">Y=</span><span class="num"><span>0</span><i class="spin"><b class="su"></b><b class="sd"></b></i></span><span class="lab">mm</span>
          <i class="sep"></i>
          <i class="chk"></i><span class="rotl">旋转</span>
          <span class="num num3"><span>0.000</span><i class="spin"><b class="su"></b><b class="sd"></b></i></span><span class="lab">°</span>
        </div>
      </div>
    </main>
  </div>

  <footer class="status">
    <span class="c c1"><em>X=62702 Y=5471</em></span>
    <span class="c c2">层高<em>:4.5m</em></span>
    <span class="c c3">底标高<em>:-0.05m</em></span>
    <span class="c c4"><em>0</em></span>
    <span class="c c5"></span>
    <span class="c c6"><em>163.6 FPS</em></span>
  </footer>

  <div class="task">
    <span class="start"><svg class="win"><use href="#win"/></svg></span>
    <div class="search">
      <i class="ring"></i><span class="stxt">在这里输入你要搜索的内容</span>
      <svg class="smic" viewBox="0 0 12 18"><rect x="3" y=".5" width="6" height="11" rx="3" fill="none" stroke="#222"/><path d="M.5 8c0 6 11 6 11 0M6 14v3M3 17.500h6" stroke="#222" fill="none"/></svg>
    </div>
    <span class="tk tk-first"><svg class="ti16"><use href="#tview"/></svg></span>
    <span class="tk"><svg class="ti22"><use href="#fan"/></svg></span>
    <span class="tk"><svg class="ti22"><use href="#ie"/></svg></span>
    <span class="tk tk-bell"><svg class="ti22"><use href="#swirl"/></svg><svg class="smallbell"><use href="#belly"/></svg></span>
    <i class="tsep"></i>
    <span class="tk tk-note under"><svg class="tinote"><use href="#note"/></svg></span>
    <span class="tk tk-g under"><svg class="tinote"><use href="#gapp"/></svg></span>
    <span class="tk tk-act under"><svg class="tiblue"><use href="#gblue"/></svg></span>
    <span class="tscroll"><i class="tup"></i><i class="tdn"></i></span>
    <i class="tsep tsep2"></i>
    <span class="tlink">链接</span>
    <svg class="tray tp"><use href="#people"/></svg>
    <span class="cpu"><span>73%</span><span>CPU使用</span></span>
    <i class="caret"></i>
    <svg class="tray tb1"><use href="#bellw"/></svg>
    <svg class="tray tb2i"><use href="#plug"/></svg>
    <svg class="tray tb3i"><use href="#wifi"/></svg>
    <svg class="tray tb4i"><use href="#vol"/></svg>
    <svg class="trkb"><use href="#kbw"/></svg>
    <span class="teng">英</span>
    <svg class="tray ts"><use href="#ime-s"/></svg>
    <span class="clock"><span>17:24</span><span>2018/9/4</span></span>
    <span class="notif"><svg class="msg"><use href="#msg"/></svg><b class="badge">4</b></span>
  </div>

  <div class="ball">75</div>

  <div class="ime ime1">
    <svg class="ims"><use href="#ime-s"/></svg>
    <div class="imebar"><b class="imec">中</b><span class="imep">·,</span><svg class="imi"><use href="#smile"/></svg><svg class="imi"><use href="#mic"/></svg><svg class="imi"><use href="#kb"/></svg><svg class="imi im-usr"><use href="#usr"/></svg><svg class="imi im-tight"><use href="#shirt"/></svg><svg class="imi im-tight"><use href="#wrench"/></svg></div>
  </div>
  <div class="ime ime2">
    <svg class="ims"><use href="#ime-s"/></svg>
    <div class="imebar"><b class="imec">英</b><span class="imep">·,</span><svg class="imi"><use href="#smile"/></svg><svg class="imi"><use href="#mic"/></svg><svg class="imi"><use href="#kb"/></svg><svg class="imi im-usr"><use href="#usr"/></svg><svg class="imi im-tight"><use href="#shirt"/></svg><svg class="imi im-tight"><use href="#wrench"/></svg></div>
  </div>
</div>
</body>
</html>
```

FILE: styles.css
```css
* { box-sizing: border-box; }
html, body { margin: 0; padding: 0; height: 100%; overflow: hidden; }
body { font: 12px/16px "Noto Sans", "Noto Sans CJK SC", sans-serif; color: #111; background: #f0f0f0; }
i, em, b { font-style: normal; }
.sprite { position: absolute; }
.app { position: relative; width: 1366px; height: 768px; overflow: hidden; display: flex; flex-direction: column; }

.title { height: 23px; background: #fff; display: flex; align-items: center; padding-left: 3px; flex: none; }
.tlogo { width: 16px; height: 16px; margin-right: 4px; }
.ttext { font-size: 12px; white-space: nowrap; letter-spacing: .37px; }
.winbtns { margin-left: auto; display: flex; align-items: center; height: 23px; }
.wmin { width: 10px; height: 1px; background: #111; margin-right: 35px; }
.wmax { width: 10px; height: 10px; border: 1px solid #111; margin-right: 36px; box-shadow: 2px -2px 0 -1px #fff, 2px -2px 0 0 #111; }
.wcls { width: 11px; height: 11px; margin-right: 19px; }

.menu { height: 31px; flex: none; display: flex; align-items: center; padding-left: 7px; gap: 11.200px; white-space: nowrap; }
.menu > * { flex: none; }
.t { display: inline-flex; align-items: center; gap: 4px; white-space: nowrap; flex: none; }
.t2 { display: inline-flex; align-items: center; gap: 5px; flex: none; }
.ic { width: 16px; height: 16px; flex: none; }
.docic { height: 20px; }
.dd { display: inline-block; flex: none; width: 0; height: 0; border-style: solid; border-color: #111 transparent transparent; border-width: 4px 3.5px 0; }
.t > .dd { margin-left: -3px; }
.newch { margin-left: -1px; gap: 3px; }
.mdd { margin-left: -4px; }
.helper { margin-left: 15px; }
.hint { margin-left: -3px; width: 186px; height: 27px; line-height: 27px; padding-left: 29px; color: #0e6a6e; background: linear-gradient(#fbfbfb, #f3f3f3); }
.acct { margin-left: -9.200px; width: 241px; height: 27px; display: flex; align-items: center; padding-left: 4px; gap: 3px; background: linear-gradient(#fbfbfb, #f3f3f3); }
.acct .dd { margin: 0 5px 0 6px; }
.bean { margin-left: -1px; }
.more { margin-left: auto; font: bold 11px/10px "Liberation Sans", sans-serif; align-self: flex-start; padding-top: 2px; margin-right: 3px; }

.bar1 { height: 30px; flex: none; display: flex; gap: 2px; }
.tb { display: flex; align-items: center; gap: 8px; height: 100%; padding: 0 3px; background: linear-gradient(#fcfcfc, #f3f3f3 70%, #f0f0f0); white-space: nowrap; flex: none; }
.tb > * { flex: none; }
.sep { flex: none; width: 1px; height: 21px; background: #b9b9b9; margin: 0 -1.500px; }
.tb-a { width: 151px; padding-left: 5px; gap: 7px; }
.tb-a .sep { margin: 0; }
.tb-b { width: 548px; padding-left: 4px; gap: 7.100px; }
.tb-c { flex: 1; padding-left: 3px; gap: 5px; }
.tb-c .sep { margin: 0; }
.sigma { width: 12px; margin-left: 3px; font: bold 14px "Liberation Sans", sans-serif; }
.off { color: #8e8e8e; }
.combo3d { width: 59px; height: 25px; background: #fff; padding-left: 3px; position: relative; }
.t.combo3d > .dd { margin-left: 2px; }
.on { background: #e5f1fb; border: 1px solid #0a7ad6; }
.orbitbtn { height: 24px; width: 75px; padding-left: 2px; margin-left: -1px; }
.tb-c > .t { margin-right: 1px; }
.tb-c > .mn2 { margin-left: -2px; }
.tb-c > .ml1 { margin-left: 1px; }
.tb-c > .ml2 { margin-left: 2px; }
.tb-c > .ml3 { margin-left: 3px; }

.work { height: 621px; flex: none; display: flex; }
.side { width: 170px; flex: none; display: flex; flex-direction: column; padding-right: 3px; }
.dock { height: 16px; background: #0a50dc; color: #fff; font-size: 12.500px; line-height: 15px; padding-left: 1px; display: flex; justify-content: space-between; align-items: center; }
.dock-r { display: flex; gap: 10px; padding-right: 5px; align-items: center; }
.pin { width: 9px; height: 11px; }
.sbtn { height: 22px; text-align: center; line-height: 22px; margin: 0 1px 0 1px; border: 1px solid; border-color: #9a9a9a #a0a0a0 #a0a0a0 #9a9a9a; background: #f0f0f0; }
.panel { height: 516px; margin: 1px 1px 0; border: 2px solid #a0a0a0; border-top: 0; border-bottom-width: 1px; display: flex; flex-direction: column; background: linear-gradient(#fff, #f2f2f2 30px); }
.expand { height: 27px; flex: none; display: flex; align-items: center; gap: 7px; padding-left: 4px; }
.exp { width: 18px; height: 16px; }
.treebox { position: relative; flex: 1; margin: 0 1px 1px 1px; border: 1px solid #a0a0a0; background: #f0f0f0; display: grid; grid-template-columns: 1fr 15px; grid-template-rows: 1fr 17px; overflow: hidden; }
.tree { position: relative; background: #fff; overflow: hidden; padding-top: 2px; }
.tree::before { content: ""; position: absolute; left: 11px; top: 16px; bottom: 0; border-left: 1px dotted #555; }
.fold, .leaf { position: relative; height: 16px; display: flex; align-items: center; white-space: nowrap; }
.fold { padding-left: 21px; }
.fi { width: 18px; height: 16px; flex: none; margin-right: 4px; position: relative; }
.chev { position: absolute; left: 7px; top: 3px; width: 7px; height: 7px; border: solid #444; border-width: 0 2px 2px 0; transform: rotate(45deg); background: #fff; z-index: 1; }
.chev.shut { left: 5px; top: 5px; border-color: #aaa; transform: rotate(-45deg); }
.fold::before { content: ""; position: absolute; left: 15px; top: 8px; width: 6px; border-top: 1px dotted #555; }
.leaf { padding-left: 40px; }
.leaf::before { content: ""; position: absolute; left: 30px; top: 0; height: 16px; border-left: 1px dotted #555; }
.leaf.last::before { height: 8px; }
.leaf::after { content: ""; position: absolute; left: 30px; top: 8px; width: 10px; border-top: 1px dotted #555; }
.li { width: 16px; height: 16px; flex: none; margin-right: 6px; }
.leaf em { font: 10px/16px "Liberation Mono", monospace; }
.leaf.sel { padding-left: 0; }
.leaf.sel .li { margin-left: 38px; margin-right: 0; width: 22px; background: #d4d4d4; padding: 0 4px 0 0; }
.leaf.sel::after { width: 8px; }
.leaf.sel span { background: #d4d4d4; padding-right: 7px; }
.vscroll { grid-column: 2; grid-row: 1; background: #f0f0f0; display: flex; flex-direction: column; align-items: stretch; position: relative; }
.vthumb { position: absolute; left: 0; right: 0; top: 18px; height: 219px; background: #cdcdcd; }
.arr { height: 16px; display: block; position: relative; }
.arr::before { content: ""; position: absolute; left: 4px; top: 6px; width: 6px; height: 6px; border: solid #333; border-width: 2px 0 0 2px; transform: rotate(45deg); }
.arr.down { margin-top: auto; }
.arr.down::before { top: 2px; transform: rotate(225deg); }
.hscroll { grid-column: 1 / 3; grid-row: 2; background: #f0f0f0; display: flex; align-items: center; position: relative; }
.arr.left { width: 17px; }
.arr.right { width: 17px; position: absolute; left: 130px; }
.arr.left::before { left: 6px; top: 5px; transform: rotate(-45deg); }
.arr.right::before { left: 3px; top: 5px; transform: rotate(135deg); }
.hthumb { width: 102px; height: 15px; margin-left: 5px; background: #cdcdcd; }

.main { flex: 1; display: flex; flex-direction: column; min-width: 0; }
.tools { height: 110px; flex: none; display: flex; flex-direction: column; padding-left: 2px; }
.rowt { height: 26px; flex: none; margin-bottom: 2px; display: flex; gap: 32px; }
.rowgrip { height: 22px; flex: none; margin-bottom: 4px; padding-left: 413px; }
.stub { width: 28px; height: 22px; background: linear-gradient(#fbfbfb, #f3f3f3); padding: 5px 0 0 2px; }
.gr { flex: none; width: 3px; height: 14px; background: repeating-linear-gradient(#a8a8a8 0 2px, transparent 2px 4px); display: block; }
.tb2 { width: 789px; gap: 7px; padding-left: 3px; }
.tb2 .sep { margin: 0 -1px; }
.tb2 .off1 { margin-left: 1px; }
.tb2 > .gr, .tb4 > .gr { margin-right: -4px; }
.tb3 { width: 565px; padding-left: 3px; gap: 3px; }
.tb3 > .gr { margin-right: -1px; }
.tb3 .t { margin-left: 3.500px; }
.tb3 .sep { margin: 0 -1px 0 0; }
.tb3 .cbt { padding-left: 0; }
.tb3b { width: 421px; padding-left: 3px; gap: 7px; }
.tb3b .wide { margin-right: 9px; }
.cb { display: inline-flex; height: 23px; background: #fff; align-items: center; width: 69px; }
.cbt { flex: 1; padding-left: 2px; }
.cba { width: 13px; height: 21px; background: #f0f0f0; display: flex; align-items: center; justify-content: center; }
.tb3 .cb:first-of-type { width: 58px; }
.tb4 { width: 486px; padding-left: 3px; gap: 7px; }
.sel1 { margin-left: 1px; gap: 3px; }
.blank { width: 56px; height: 23px; background: #fff; display: flex; align-items: center; justify-content: flex-end; padding-right: 4px; margin: 0 -1px 0 -5px; }

.canvas { height: 481px; flex: none; background: #000; overflow: hidden; }
.scene { display: block; background: #000; }
.green path, .green circle { fill: none; stroke: #008a00; stroke-width: 1; shape-rendering: crispEdges; }
.red path { fill: none; stroke: #f00; stroke-width: 1; shape-rendering: crispEdges; }
.dim { font: 16px "Liberation Sans", sans-serif; fill: #d0d0d0; text-anchor: middle; }
.axt { font: 12px "Liberation Sans", sans-serif; fill: #e8e8e8; text-anchor: middle; }
.solid path { shape-rendering: crispEdges; }
.l { fill: #b3b300; }
.r { fill: #999900; }
.d2 { fill: #a3a300; }
.y { fill: #e6e600; }
.g1 { fill: #888; }
.g2 { fill: #777; }
.k { fill: #000; }
.b { fill: #0000c8; }
.bd { fill: #0000a8; }
.yl { fill: none; stroke: #e6e600; }
.redl { fill: none; stroke: #f00; }
.orbit ellipse, .orbit circle { fill: none; stroke: #bcbcbc; stroke-width: .8; }
.gz { stroke: #0a84ff; stroke-width: 5; }
.gzf { fill: #0a84ff; }
.gy { stroke: #14ff14; stroke-width: 4; }
.gyf { fill: #14ff14; }
.gx { stroke: #f00; stroke-width: 4; }
.gxf { fill: #f00; }
.tz, .ty, .tx { font: 13px "Liberation Sans", sans-serif; }
.tz { fill: #0a84ff; }
.ty { fill: #14d014; }
.tx { fill: #e00; }

.snap { height: 30px; flex: none; display: flex; gap: 3px; padding: 1px 0 1px 212px; }
.sn1 { width: 263px; padding-left: 4px; gap: 3.500px; }
.sn1 .t { margin-right: 1px; }
.t.snbtn { width: 52px; height: 24px; padding-left: 2px; margin: 0 -1px; }
.t.snb2 { margin: 0 0 0 -2px; }
.sn2 { width: 415px; padding-left: 3px; gap: 3px; }
.sn2 .sep { margin: 0; }
.cbo { width: 57px; }
.lab { color: #555; }
.laby { margin-left: 2px; }
.num { width: 56px; height: 22px; border: 1px solid #8e8e8e; background: #f0f0f0; display: flex; align-items: center; justify-content: flex-end; color: #666; }
.num3 { width: 67px; margin-left: 1px; margin-right: 1px; }
.spin { width: 13px; height: 20px; display: flex; flex-direction: column; justify-content: space-around; align-items: center; }
.su, .sd { width: 0; height: 0; border: solid transparent; border-width: 0 3px 4px; border-bottom-color: #555; }
.sd { border-width: 4px 3px 0; border-top-color: #555; border-bottom-color: transparent; }
.chk { width: 12px; height: 12px; border: 1px solid #888; background: #f0f0f0; margin: 0 5px 0 1px; }
.rotl { margin-right: 1px; }

.status { height: 23px; flex: none; padding-top: 3px; display: flex; gap: 3px; line-height: 18px; background: #f0f0f0; border-top: 1px solid #fafafa; }
.c { height: 20px; padding-left: 1px; background: #f0f0f0; border: 1px solid #dcdcdc; overflow: hidden; white-space: nowrap; flex: none; }
.c em { font: 10px/18px "Liberation Mono", monospace; }
.c1 { width: 147px; } .c2 { width: 77px; } .c3 { width: 97px; } .c4 { width: 47px; } .c5 { width: 913px; } .c6 { flex: 1; }

.task { height: 40px; flex: none; background: #0b1b20; display: flex; align-items: center; color: #eee; position: relative; }
.task > * { flex: none; }
.start { width: 48px; height: 40px; background: #000; display: flex; align-items: center; justify-content: center; }
.win { width: 16px; height: 16px; }
.search { width: 344px; height: 40px; background: #f2f2f2; color: #333; display: flex; align-items: center; padding-left: 10px; }
.ring { width: 20px; height: 20px; border: 3px solid #111; border-radius: 50%; flex: none; margin-right: 10px; }
.stxt { font-size: 14px; flex: 1; }
.smic { width: 12px; height: 18px; margin-right: 14px; }
.tk { width: 52px; height: 40px; display: flex; align-items: center; justify-content: center; position: relative; }
.tk-first { margin-left: -3px; }
.ti16 { width: 16px; height: 16px; }
.ti22 { width: 22px; height: 22px; }
.smallbell { position: absolute; left: 24px; top: 3px; width: 14px; height: 14px; }
.tsep { width: 2px; height: 20px; background: #46545a; margin: 0 14px 0 4px; }
.tk-note { width: 48px; margin-left: 2px; }
.tk-g { margin-left: -2px; width: 48px; }
.under { box-shadow: inset 0 -2px 0 #76b9ed; }
.tinote { width: 24px; height: 26px; }
.tk-act { background: #3a4a52; width: 48px; margin-left: 3px; }
.tiblue { width: 24px; height: 24px; }
.tscroll { width: 17px; height: 40px; margin-left: 66px; background: #ececec; display: flex; flex-direction: column; justify-content: space-around; align-items: center; }
.tup, .tdn { width: 6px; height: 6px; border: solid #555; border-width: 1.500px 0 0 1.500px; transform: rotate(45deg); }
.tdn { transform: rotate(225deg); }
.tsep2 { margin: 0 0 0 13px; width: 3px; background: linear-gradient(90deg, #46545a 1px, transparent 1px 2px, #46545a 2px); }
.tlink { margin-left: 10px; font-size: 12px; color: #ddd; width: 24px; white-space: nowrap; }
.tray { width: 16px; height: 16px; }
.tp { margin-left: 23px; }
.cpu { width: 74px; margin-left: 19px; display: flex; flex-direction: column; align-items: center; line-height: 17px; font-size: 12px; }
.caret { width: 9px; height: 9px; border: solid #eee; border-width: 1.500px 0 0 1.500px; transform: rotate(45deg); margin: 4px 0 0 9px; }
.tb1 { margin-left: 13px; width: 14px; }
.tb2i { margin-left: 6px; width: 18px; }
.tb3i { margin-left: 11px; }
.tb4i { margin-left: 6px; }
.trkb { width: 24px; height: 18px; margin-left: 7px; }
.teng { margin-left: 9px; font-size: 14px; }
.ts { width: 18px; height: 18px; margin-left: 13px; }
.clock { margin-left: 10px; width: 62px; display: flex; flex-direction: column; align-items: center; line-height: 20px; font-size: 13px; }
.notif { position: relative; margin-left: 23px; width: 24px; height: 30px; }
.msg { width: 16px; height: 16px; position: absolute; left: 0; top: 6px; }
.badge { position: absolute; left: 7px; top: 15px; width: 16px; height: 16px; border-radius: 50%; background: #3a3f44; border: 1px solid #888; color: #fff; font: 11px/14px "Liberation Sans", sans-serif; text-align: center; }

.ball { position: absolute; left: 461px; top: -31px; width: 48px; height: 48px; border-radius: 50%; background: #3ab54a; border: 2px solid #ccc; color: #fff; font: bold 10px/10px "Liberation Sans", sans-serif; text-align: center; padding-top: 33px; box-shadow: 0 1px 2px #999; }
.ime { position: absolute; display: flex; align-items: center; }
.ime1 { left: 793px; top: 101px; }
.ime2 { left: 890px; top: 165px; }
.ims { width: 26px; height: 26px; position: relative; z-index: 1; flex: none; }
.imebar { height: 24px; width: 184px; margin-left: -3px; border: 1px solid #b6c9dc; background: #f9fbfd; display: flex; align-items: center; padding-left: 8px; gap: 6px; }
.imec { color: #1e78c8; font-size: 15px; margin-right: 2px; }
.imep { color: #1e78c8; font: bold 13px/12px "Liberation Sans", sans-serif; width: 17px; }
.imi { width: 16px; height: 16px; flex: none; }
.im-usr { margin-left: 3px; }
.im-tight { margin-left: -3px; }
```
